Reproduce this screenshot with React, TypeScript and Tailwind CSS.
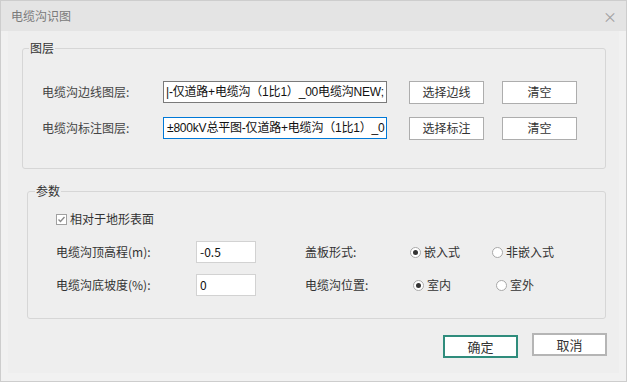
import React from "react";

const font = "font-['Noto_Sans_CJK_SC','Noto_Sans',sans-serif]";
const inputFont = "font-['Liberation_Sans','Noto_Sans_CJK_SC',sans-serif]";

function Radio({ checked, label }: { checked?: boolean; label: string }) {
  return (
    <div className="flex items-center">
      <div className="w-[11px] h-[11px] rounded-full border border-[#a8a8a8] bg-white flex items-center justify-center">
        {checked && <div className="w-[5px] h-[5px] rounded-full bg-[#333]" />}
      </div>
      <span className="ml-[3px] text-[12px] leading-[14px] text-[#333]">{label}</span>
    </div>
  );
}

function Btn({ children }: { children: React.ReactNode }) {
  return (
    <div className="w-[75px] h-[23px] border border-[#adadad] bg-white flex items-center justify-center text-[12px] text-[#333]">
      {children}
    </div>
  );
}

export default function App() {
  return (
    <div className={`w-[627px] h-[382px] border border-[#cdcdcd] bg-[#f1f1f1] flex flex-col ${font}`}>
      <div className="h-[30px] bg-[#e4e4e4] flex items-center justify-between pl-[10px] pr-[9px]">
        <span className="text-[12px] text-[#7a7a7a]">电缆沟识图</span>
        <span className="text-[14px] text-[#a0a0a0] leading-none">×</span>
      </div>
      <div className="flex-1 flex px-[7px] pb-[8px]">
        <div className="flex-1 bg-[#eeeeee] flex flex-col">
          {/* 图层 */}
          <div className="relative ml-[14px] mt-[17px] w-[584px] h-[121px] border border-[#d6d6d6] rounded-[3px]">
            <span className="absolute left-[6px] top-[-9px] px-[1px] bg-[#eeeeee] text-[12px] leading-[16px] text-[#333]">图层</span>
            <div className="flex flex-col pt-[32px] pl-[19px] gap-[14px]">
              <div className="flex items-center h-[22px]">
                <span className="w-[121px] text-[12px] text-[#444]">电缆沟边线图层:</span>
                <div className={`w-[224px] h-[22px] border border-[#7a7a7a] bg-white overflow-hidden whitespace-nowrap text-[12px] leading-[20px] tracking-[-0.2px] text-[#111] pl-[2px] ${inputFont}`}>
                  |-仅道路+电缆沟（1比1）_00电缆沟NEW;
                </div>
                <div className="ml-[22px]"><Btn>选择边线</Btn></div>
                <div className="ml-[18px]"><Btn>清空</Btn></div>
              </div>
              <div className="flex items-center h-[22px]">
                <span className="w-[121px] text-[12px] text-[#444]">电缆沟标注图层:</span>
                <div className={`w-[224px] h-[22px] border border-[#0078d7] bg-white overflow-hidden whitespace-nowrap text-[12px] leading-[20px] tracking-[-0.2px] text-[#111] pl-[3px] ${inputFont}`}>
                  ±800kV总平图-仅道路+电缆沟（1比1）_0
                </div>
                <div className="ml-[22px]"><Btn>选择标注</Btn></div>
                <div className="ml-[18px]"><Btn>清空</Btn></div>
              </div>
            </div>
          </div>

          {/* 参数 */}
          <div className="relative ml-[19px] mt-[22px] w-[579px] h-[128px] border border-[#d6d6d6] rounded-[3px]">
            <span className="absolute left-[7px] top-[-9px] px-[1px] bg-[#eeeeee] text-[12px] leading-[16px] text-[#333]">参数</span>
            <div className="flex flex-col pl-[28px] pt-[20px]">
              <div className="flex items-center h-[14px]">
                <div className="w-[11px] h-[11px] border border-[#a0a0a0] bg-white flex items-center justify-center">
                  <svg width="9" height="9" viewBox="0 0 9 9">
                    <path d="M1.5 4.5 L3.5 6.5 L7.5 2" fill="none" stroke="#8a8a8a" strokeWidth="1.4" />
                  </svg>
                </div>
                <span className="ml-[3px] text-[12px] text-[#333]">相对于地形表面</span>
              </div>
              <div className="flex items-center h-[22px] mt-[15px]">
                <span className="w-[140px] text-[12px] text-[#333]">电缆沟顶高程(m):</span>
                <div className="w-[60px] h-[22px] border border-[#d2d2d2] bg-white text-[12px] leading-[20px] text-[#111] pl-[3px]">-0.5</div>
                <span className="ml-[49px] w-[105px] text-[12px] text-[#333]">盖板形式:</span>
                <Radio checked label="嵌入式" />
                <div className="ml-[32px]"><Radio label="非嵌入式" /></div>
              </div>
              <div className="flex items-center h-[22px] mt-[11px]">
                <span className="w-[140px] text-[12px] text-[#333]">电缆沟底坡度(%):</span>
                <div className="w-[60px] h-[22px] border border-[#d2d2d2] bg-white text-[12px] leading-[20px] text-[#111] pl-[3px]">0</div>
                <span className="ml-[49px] w-[108px] text-[12px] text-[#333]">电缆沟位置:</span>
                <Radio checked label="室内" />
                <div className="ml-[45px]"><Radio label="室外" /></div>
              </div>
            </div>
          </div>

          <div className="flex justify-end items-start pr-[12px] mt-[14px]">
            <div className="mt-[2px] w-[75px] h-[23px] border-2 border-[#2f8c7c] bg-white flex items-center justify-center text-[13px] text-[#333]">确定</div>
            <div className="ml-[14px] w-[75px] h-[23px] border-2 border-[#b5b5b5] bg-white flex items-center justify-center text-[13px] text-[#333]">取消</div>
          </div>
        </div>
      </div>
    </div>
  );
}
